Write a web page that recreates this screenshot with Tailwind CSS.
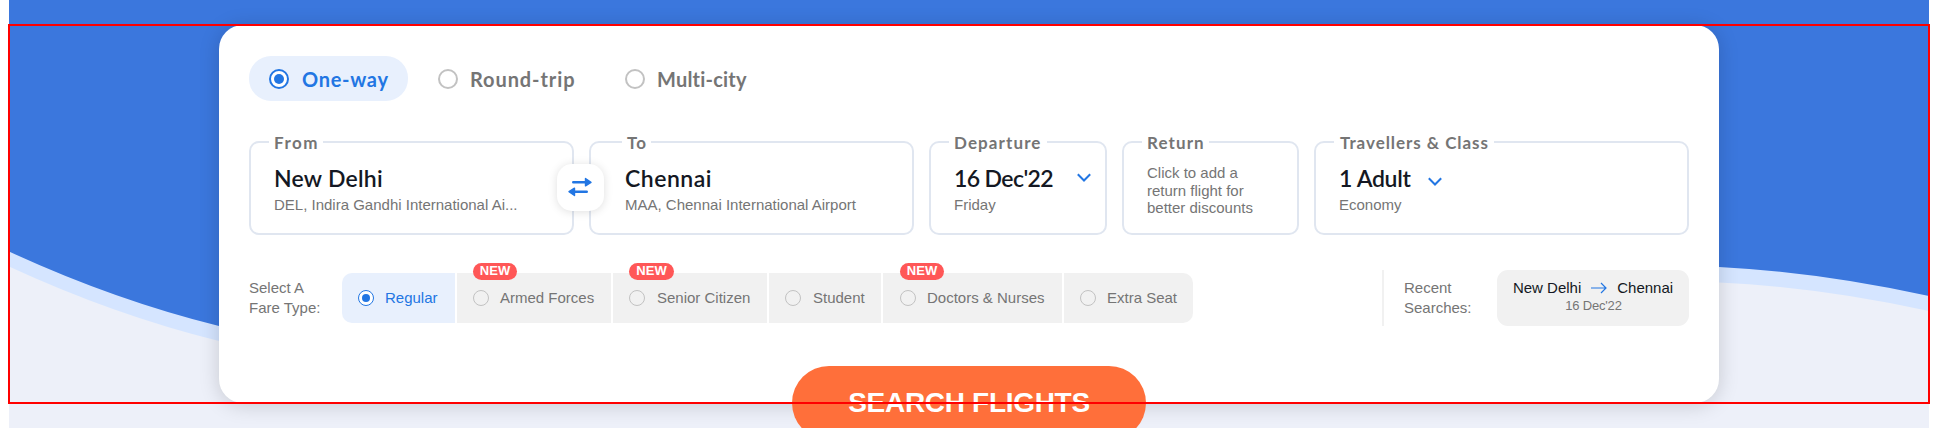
<!DOCTYPE html>
<html lang="en">
<head>
<meta charset="utf-8">
<title>Search Flights</title>
<script src="https://cdn.jsdelivr.net/npm/@tailwindcss/browser@4"></script>
</head>
<body class="bg-white">
<div class="relative h-[428px] w-[1938px] overflow-hidden px-[9px] text-[15px] text-[#757575]" style="font-family:'Liberation Sans',Arial,sans-serif">
  <!-- curved backdrop -->
  <svg class="absolute left-[9px] top-0" width="1920" height="428" viewBox="9 0 1920 428">
    <rect x="9" width="1920" height="428" fill="#edf0f9"/>
    <path d="M9 0V266.500Q114 315 219 341L500 380L1400 275L1719 282.500Q1819 287 1929 311V0Z" fill="#d5e5ff"/>
    <path d="M9 0V251.500Q114 300 219 326L500 365L1400 260L1719 267Q1819 272 1929 296V0Z" fill="#3b77dd"/>
  </svg>

  <main class="relative ml-[210px] mt-[25px] flex h-[378px] w-[1500px] flex-col rounded-[24px] bg-white px-[30px] pt-[31px] shadow-[0_2px_20px_rgba(0,0,0,0.17)]">
    <!-- trip type -->
    <div class="flex h-[45px] shrink-0 items-center text-[20px] leading-6 font-bold" style="font-family:Lato,sans-serif">
      <label class="flex h-full w-[159px] items-center gap-[13px] rounded-[22px] bg-[#e8f0fd] pl-[20px] tracking-[0.7px] text-[#2276e3]">
        <span class="flex size-5 items-center justify-center rounded-full border-2 border-[#2276e3] bg-white"><span class="size-[10px] rounded-full bg-[#2276e3]"></span></span>One-way</label>
      <label class="ml-[30px] flex w-[187px] items-center gap-[12px] tracking-[0.9px]"><span class="size-5 rounded-full border-2 border-[#c2c2c2]"></span>Round-trip</label>
      <label class="flex items-center gap-[12px] tracking-[0.2px]"><span class="size-5 rounded-full border-2 border-[#c2c2c2]"></span>Multi-city</label>
    </div>

    <!-- search fields -->
    <div class="relative mt-[31px] flex h-[103px] shrink-0 gap-[15px]">
      <fieldset class="h-[103px] w-[325px] rounded-[10px] border-2 border-[#e0e6f0] pl-[23px]">
        <legend class="-ml-[5px] h-5 w-[54px] pl-[5px] text-[17px] leading-[22px] font-bold tracking-[1.5px] whitespace-nowrap" style="font-family:Lato,sans-serif">From</legend>
        <div class="mt-[10px] text-[23px] leading-8 font-semibold tracking-[0.25px] text-[#141823]" style="font-family:Lato,sans-serif">New Delhi</div>
        <div class="leading-[22px] whitespace-nowrap">DEL, Indira Gandhi International Ai...</div>
      </fieldset>
      <fieldset class="h-[103px] w-[325px] rounded-[10px] border-2 border-[#e0e6f0] pl-[34px]">
        <legend class="-ml-[3px] h-5 w-[29px] pl-[5px] text-[17px] leading-[22px] font-bold tracking-[1.2px] whitespace-nowrap" style="font-family:Lato,sans-serif">To</legend>
        <div class="mt-[10px] text-[23px] leading-8 font-semibold tracking-[0.5px] text-[#141823]" style="font-family:Lato,sans-serif">Chennai</div>
        <div class="leading-[22px] whitespace-nowrap">MAA, Chennai International Airport</div>
      </fieldset>
      <fieldset class="h-[103px] w-[178px] rounded-[10px] border-2 border-[#e0e6f0] pl-[23px]">
        <legend class="-ml-[5px] h-5 w-[98px] pl-[5px] text-[17px] leading-[22px] font-bold tracking-[1.1px] whitespace-nowrap" style="font-family:Lato,sans-serif">Departure</legend>
        <div class="mt-[10px] flex w-[137px] justify-between text-[23px] leading-8 font-semibold tracking-[-0.6px] whitespace-nowrap text-[#141823]" style="font-family:Lato,sans-serif">16 Dec'22
          <svg class="mt-[11px]" width="14" height="10" viewBox="0 0 14 10" fill="none" stroke="#2276e3" stroke-width="2"><path d="M.8 1.200 7 7.500l6.200-6.300"/></svg></div>
        <div class="leading-[22px]">Friday</div>
      </fieldset>
      <fieldset class="h-[103px] w-[177px] rounded-[10px] border-2 border-[#e0e6f0] pl-[23px]">
        <legend class="-ml-[5px] h-5 w-[67px] pl-[5px] text-[17px] leading-[22px] font-bold tracking-[1.1px] whitespace-nowrap" style="font-family:Lato,sans-serif">Return</legend>
        <div class="mt-[12px] leading-[17.500px]">Click to add a<br>return flight for<br>better discounts</div>
      </fieldset>
      <fieldset class="h-[103px] w-[375px] rounded-[10px] border-2 border-[#e0e6f0] pl-[23px]">
        <legend class="-ml-[5px] h-5 w-[160px] pl-[6px] text-[17px] leading-[22px] font-bold tracking-[0.95px] whitespace-nowrap" style="font-family:Lato,sans-serif">Travellers &amp; Class</legend>
        <div class="mt-[10px] flex w-[103px] justify-between text-[23px] leading-8 font-semibold tracking-[-0.3px] whitespace-nowrap text-[#141823]" style="font-family:Lato,sans-serif">1 Adult
          <svg class="mt-[15px]" width="14" height="10" viewBox="0 0 14 10" fill="none" stroke="#2276e3" stroke-width="2"><path d="M.8 1.200 7 7.500l6.200-6.300"/></svg></div>
        <div class="leading-[22px]">Economy</div>
      </fieldset>
      <button class="absolute left-[308px] top-[32px] flex size-[47px] items-center rounded-[15px] bg-white pb-px pl-[11px] shadow-[0_1px_10px_rgba(0,0,0,0.13)]">
        <svg width="24" height="20" viewBox="0 0 24 20" fill="#2276e3" stroke="#2276e3" stroke-linecap="round" stroke-linejoin="round"><path d="M5.300 5.300H18M6 14.700h12.700" stroke-width="2.600"/><path d="M17.500 1.500 23 5.300l-5.500 3.500zM6.500 11.200 1 14.700l5.500 3.800z" stroke-width="1.400"/></svg>
      </button>
    </div>

    <!-- fares and recent searches -->
    <div class="mt-[35px] flex h-[56px] shrink-0 items-center">
      <div class="w-[93px] leading-5 whitespace-nowrap">Select A<br>Fare Type:</div>
      <div class="flex h-[50px] gap-[2px] whitespace-nowrap">
        <label class="flex w-[113px] items-center gap-[11px] rounded-l-[10px] bg-[#e8f0fd] pl-[16px] text-[#2276e3]"><span class="flex size-4 items-center justify-center rounded-full border border-[#2276e3] bg-white"><span class="size-2 rounded-full bg-[#2276e3]"></span></span>Regular</label>
        <label class="relative flex w-[154px] items-center gap-[11px] bg-[#f1f1f1] pl-[16px]"><span class="absolute -top-[10px] left-[16px] h-[17px] w-[44px] rounded-[9px] bg-[#ff5757] text-center text-[13px] leading-[15px] font-bold text-white">NEW</span><span class="size-4 rounded-full border border-[#c2c2c2]"></span>Armed Forces</label>
        <label class="relative flex w-[154px] items-center gap-[12px] bg-[#f1f1f1] pl-[16px]"><span class="absolute -top-[10px] left-[16px] h-[17px] w-[45px] rounded-[9px] bg-[#ff5757] text-center text-[13px] leading-[15px] font-bold text-white">NEW</span><span class="size-4 rounded-full border border-[#c2c2c2]"></span>Senior Citizen</label>
        <label class="flex w-[112px] items-center gap-[12px] bg-[#f1f1f1] pl-[16px]"><span class="size-4 rounded-full border border-[#c2c2c2]"></span>Student</label>
        <label class="relative flex w-[179px] items-center gap-[11px] bg-[#f1f1f1] pl-[17px]"><span class="absolute -top-[10px] left-[17px] h-[17px] w-[44px] rounded-[9px] bg-[#ff5757] text-center text-[13px] leading-[15px] font-bold text-white">NEW</span><span class="size-4 rounded-full border border-[#c2c2c2]"></span>Doctors &amp; Nurses</label>
        <label class="flex w-[129px] items-center gap-[11px] rounded-r-[10px] bg-[#f1f1f1] pl-[16px]"><span class="size-4 rounded-full border border-[#c2c2c2]"></span>Extra Seat</label>
      </div>
      <div class="ml-auto flex h-full items-center border-l-2 border-[#f1f1f1] pl-[20px]">
        <div class="w-[93px] leading-5">Recent<br>Searches:</div>
        <div class="h-full w-[192px] rounded-[11px] bg-[#f1f1f1] pt-[8px] text-center">
          <div class="flex items-center justify-center gap-[10px] leading-5 text-[#141823]">New Delhi
            <svg width="16" height="12" viewBox="0 0 16 12" fill="none" stroke="#2276e3" stroke-width="1.200"><path d="M0 6h15M10 1l5 5-5 5"/></svg>Chennai</div>
          <div class="pl-px text-[13px] leading-4 tracking-[-0.2px]">16 Dec'22</div>
        </div>
      </div>
    </div>

    <button class="mt-[40px] h-[74px] w-[354px] shrink-0 self-center rounded-full bg-[#ff6f3a] text-[28px] font-bold tracking-[-0.3px] text-white">SEARCH FLIGHTS</button>
  </main>

  <!-- highlight frame -->
  <div class="pointer-events-none absolute left-[8px] top-[24px] h-[380px] w-[1922px] border-2 border-[#ff0000]"></div>
</div>
</body>
</html>
